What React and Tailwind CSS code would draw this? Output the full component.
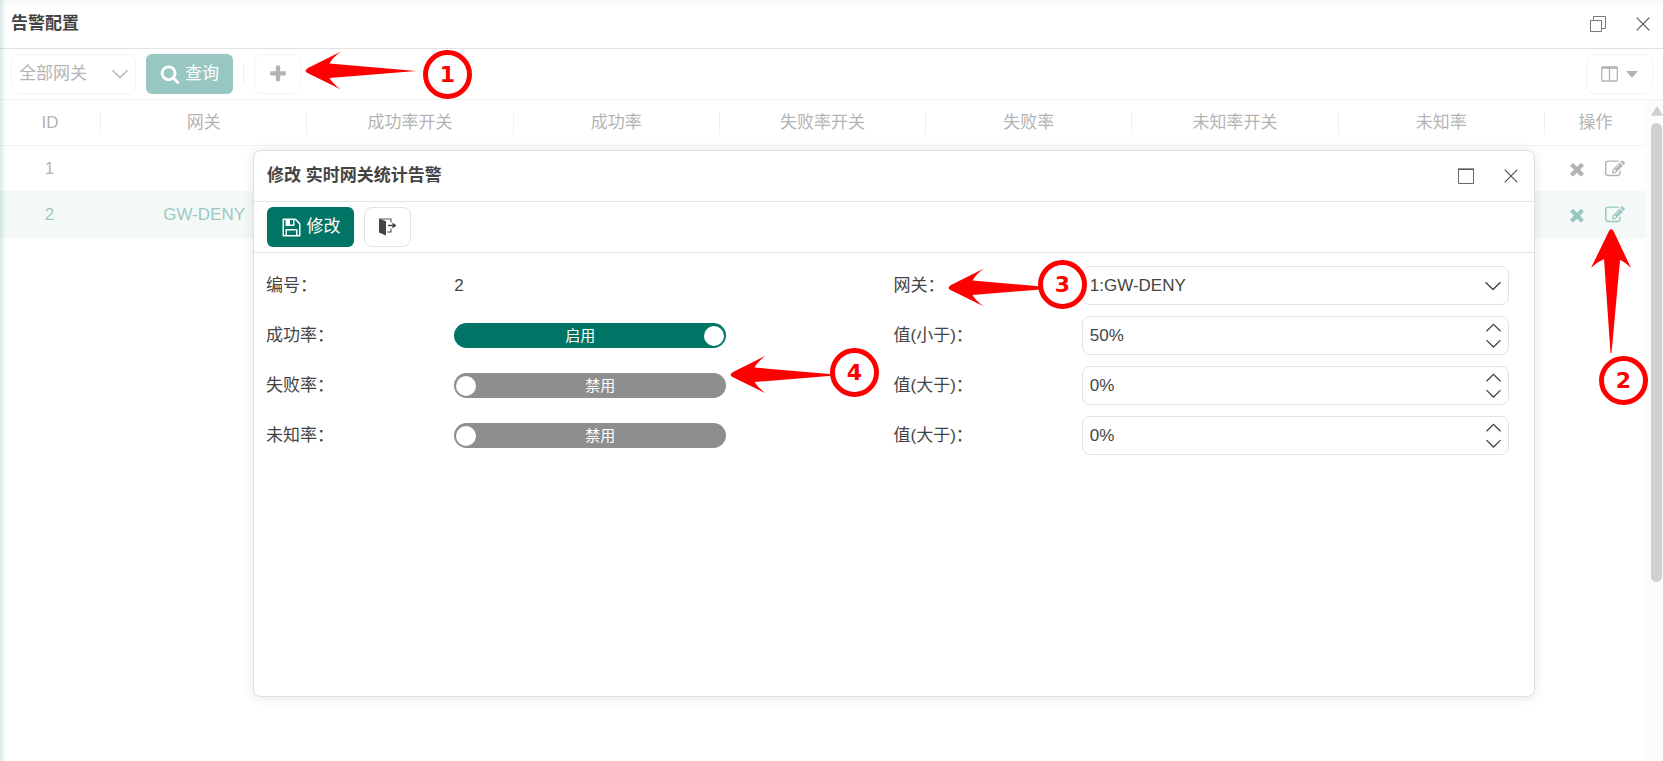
import React from "react";

const FA = {
  search:
    "M1216 832q0-185-131.5-316.5t-316.5-131.5-316.5 131.5-131.5 316.5 131.5 316.5 316.5 131.5 316.5-131.5 131.5-316.5zm512 832q0 52-38 90t-90 38q-54 0-90-38l-343-342q-179 124-399 124-143 0-273.5-55.5t-225-150-150-225-55.5-273.5 55.5-273.5 150-225 225-150 273.5-55.5 273.5 55.5 225 150 150 225 55.5 273.5q0 220-124 399l343 343q37 37 37 90z",
  plus: "M1600 736v192q0 40-28 68t-68 28h-416v416q0 40-28 68t-68 28h-192q-40 0-68-28t-28-68v-416h-416q-40 0-68-28t-28-68v-192q0-40 28-68t68-28h416v-416q0-40 28-68t68-28h192q40 0 68 28t28 68v416h416q40 0 68 28t28 68z",
  times:
    "M1490 1322q0 40-28 68l-136 136q-28 28-68 28t-68-28l-294-294-294 294q-28 28-68 28t-68-28l-136-136q-28-28-28-68t28-68l294-294-294-294q-28-28-28-68t28-68l136-136q28-28 68-28t68 28l294 294 294-294q28-28 68-28t68 28l136 136q28 28 28 68t-28 68l-294 294 294 294q28 28 28 68z",
  edit: "M888 1184l116-116-152-152-116 116v56h96v96h56zm440-720q-16-16-33 1l-350 350q-17 17-1 33t33-1l350-350q17-17 1-33zm80 594v190q0 119-84.5 203.5t-203.5 84.5h-832q-119 0-203.5-84.5t-84.5-203.5v-832q0-119 84.5-203.5t203.5-84.5h832q63 0 117 25 15 7 18 23 3 17-9 29l-49 49q-14 14-32 8-23-6-45-6h-832q-66 0-113 47t-47 113v832q0 66 47 113t113 47h832q66 0 113-47t47-113v-126q0-13 9-22l64-64q15-15 35-7t20 29zm-96-738l288 288-672 672h-288v-288zm444 132l-92 92-288-288 92-92q28-28 68-28t68 28l152 152q28 28 28 68t-28 68z",
  save: "M512 1536h768v-384h-768v384zm896 0h128v-896q0-14-10-38.5t-20-34.5l-281-281q-10-10-34-20t-39-10v416q0 40-28 68t-68 28h-576q-40 0-68-28t-28-68v-416h-128v1280h128v-416q0-40 28-68t68-28h832q40 0 68 28t28 68v416zm-384-928v-320q0-13-9.5-22.5t-22.5-9.5h-192q-13 0-22.5 9.5t-9.5 22.5v320q0 13 9.5 22.5t22.5 9.5h192q13 0 22.5-9.5t9.5-22.5zm640 32v928q0 40-28 68t-68 28h-1344q-40 0-68-28t-28-68v-1344q0-40 28-68t68-28h928q40 0 88 20t76 48l280 280q28 28 48 76t20 88z",
};

function Icon({ name, className = "size-5" }) {
  return (
    <svg viewBox="0 0 1792 1792" fill="currentColor" className={className} aria-hidden="true">
      <path d={FA[name]} />
    </svg>
  );
}

function CloseIcon() {
  return (
    <svg viewBox="0 0 16 16" className="size-4" fill="none" stroke="#555" strokeWidth="1.2" aria-hidden="true">
      <path d="M1.7 1.7 14.3 14.3M14.3 1.7 1.7 14.3" />
    </svg>
  );
}

function RestoreIcon() {
  return (
    <svg viewBox="0 0 16 16" className="size-4" fill="none" stroke="#777" aria-hidden="true">
      <path d="M.5 4.5h11v11h-11zM3.5 4.5v-4h12v12h-4" />
    </svg>
  );
}

function MaximizeIcon() {
  return (
    <svg viewBox="0 0 16 16" className="size-4" fill="none" stroke="#666" aria-hidden="true">
      <path d="M.5 1v14.5h15V1" />
      <path d="M0 1.2h16" stroke="#555" strokeWidth="1.6" />
    </svg>
  );
}

function Chevron({ up = false, className = "w-4" }) {
  return (
    <svg viewBox="0 0 16 10" className={className} fill="none" stroke="currentColor" strokeWidth="1.4" aria-hidden="true">
      <path d={up ? "M.5 8.8 8 1.4l7.5 7.4" : "M.5 1.2 8 8.6l7.5-7.4"} />
    </svg>
  );
}

function ExitIcon() {
  return (
    <svg viewBox="0 0 18 18" className="size-[18px]" aria-hidden="true">
      <path d="M0 .5 7 3.2V17.500L0 14.500z" fill="#444" />
      <path d="M.5 1h11.500v3.500M12 10.500v3.500H8" fill="none" stroke="#555" strokeWidth="1.1" />
      <path d="M9 7.500h5.500" stroke="#444" strokeWidth="1.5" />
      <path d="M13.500 4.600 17.500 7.500l-4 2.900z" fill="#444" />
    </svg>
  );
}

function ColumnsIcon() {
  return (
    <svg viewBox="0 0 17 16" className="h-4 w-[17px]" fill="none" stroke="currentColor" strokeWidth="1.3" aria-hidden="true">
      <rect x=".7" y="1" width="15.600" height="14" rx="1" />
      <path d="M8.500 2v13" />
      <path d="M.7 1.800h15.600" strokeWidth="2" />
    </svg>
  );
}

const columns = ["网关", "成功率开关", "成功率", "失败率开关", "失败率", "未知率开关", "未知率"];
const rows = [
  { id: 1, gateway: "", active: false },
  { id: 2, gateway: "GW-DENY", active: true },
];

function HeaderCell({ children, last = false, className = "" }) {
  return (
    <th className={`h-[46px] border-b border-[#e2e2e2] p-0 font-normal ${className}`}>
      <div className={`flex h-[22px] items-center justify-center ${last ? "" : "border-r border-[#dcdcdc]"}`}>{children}</div>
    </th>
  );
}

function GatewayTable() {
  return (
    <table className="w-full table-fixed border-separate border-spacing-0 self-start text-center">
      <thead>
        <tr>
          <HeaderCell className="w-[101px]">ID</HeaderCell>
          {columns.map((c) => (
            <HeaderCell key={c}>{c}</HeaderCell>
          ))}
          <HeaderCell last className="w-[101px]">操作</HeaderCell>
        </tr>
      </thead>
      <tbody>
        {rows.map((r) => (
          <tr key={r.id} className={r.active ? "bg-[#e5f1f0] text-[#007566]" : ""}>
            <td className="h-[46px] border-b border-[#e5eeed] p-0 pr-[2px]">{r.id}</td>
            <td className="border-b border-[#e5eeed] p-0">{r.gateway}</td>
            {columns.slice(1).map((c) => (
              <td key={c} className="border-b border-[#e5eeed] p-0" />
            ))}
            <td className="border-b border-[#e5eeed] p-0">
              <div className="flex items-center justify-center gap-[18px]">
                <button type="button" aria-label="删除">
                  <Icon name="times" />
                </button>
                <button type="button" aria-label="编辑">
                  <Icon name="edit" />
                </button>
              </div>
            </td>
          </tr>
        ))}
      </tbody>
    </table>
  );
}

function Scrollbar() {
  return (
    <div className="flex w-[17px] shrink-0 flex-col items-center bg-[#fafafa] pl-1 pt-[6px]" aria-hidden="true">
      <svg viewBox="0 0 12 10" className="h-[10px] w-3" fill="#8b8b8b">
        <path d="M6 1.500 11 9H1z" stroke="#8b8b8b" strokeWidth="1.500" strokeLinejoin="round" />
      </svg>
      <div className="mt-[7px] h-[70%] w-[11px] rounded-full bg-[#8b8b8b]" />
    </div>
  );
}

function Switch({ id, label, checked }) {
  return (
    <label
      htmlFor={id}
      className={`flex h-[25px] w-[272px] cursor-pointer items-center rounded-full p-[2px] text-[15px] text-white ${
        checked ? "flex-row-reverse bg-[#007566]" : "bg-[#8e8e8e]"
      }`}
    >
      <input id={id} type="checkbox" role="switch" aria-label={label} defaultChecked={checked} className="peer sr-only" />
      <span className="size-5 shrink-0 rounded-full bg-white" />
      <span className="flex-1 text-center leading-5">{checked ? "启用" : "禁用"}</span>
    </label>
  );
}

function Field({ label, htmlFor, children }) {
  return (
    <div className="flex h-[39px] items-center">
      <label htmlFor={htmlFor} className="w-[30%]">
        {label}
      </label>
      <div className="w-[70%] pr-3">{children}</div>
    </div>
  );
}

function NumberBox({ id, value }) {
  return (
    <div className="flex h-[39px] items-center rounded-lg border border-[#e2e2e2] px-[7px]">
      <input id={id} type="text" defaultValue={value} className="min-w-0 flex-1 outline-none" />
      <div className="flex flex-col gap-[6px]">
        <button type="button" aria-label="增加">
          <Chevron up className="w-[15px]" />
        </button>
        <button type="button" aria-label="减少">
          <Chevron className="w-[15px]" />
        </button>
      </div>
    </div>
  );
}

function EditDialog() {
  return (
    <section
      role="dialog"
      aria-labelledby="dialog-title"
      className="flex h-[547px] flex-col rounded-lg border border-[#dfdfdf] bg-white shadow-[0_1px_12px_rgba(0,0,0,0.1)]"
    >
      <header className="flex h-[51px] items-center justify-between border-b border-[#e2e2e2] pl-[13px] pr-[15px]">
        <h2 id="dialog-title" className="font-bold">
          修改 实时网关统计告警
        </h2>
        <div className="flex gap-[29px]">
          <button type="button" aria-label="最大化">
            <MaximizeIcon />
          </button>
          <button type="button" aria-label="关闭">
            <CloseIcon />
          </button>
        </div>
      </header>
      <div className="flex gap-[10px] border-b border-[#e2e2e2] px-[13px] py-[5px]">
        <button type="button" className="flex h-10 w-[87px] items-center justify-center gap-[5px] rounded-md bg-[#007566] text-white">
          <Icon name="save" className="size-[21px]" />
          修改
        </button>
        <button type="button" aria-label="退出" className="flex h-10 w-[47px] items-center justify-center rounded-lg border border-[#e2e2e2]">
          <ExitIcon />
        </button>
      </div>
      <form className="grid grid-cols-2 gap-y-[11px] py-[13px] pl-3 pr-[13px]">
        <Field label="编号：" htmlFor="f-id">
          <output id="f-id">2</output>
        </Field>
        <Field label="网关：" htmlFor="f-gw">
          <div className="relative">
            <select id="f-gw" className="h-[39px] w-full appearance-none rounded-lg border border-[#e2e2e2] bg-transparent pl-[7px] pr-8 outline-none">
              <option>1:GW-DENY</option>
            </select>
            <span className="pointer-events-none absolute inset-y-0 right-2 flex items-center">
              <Chevron />
            </span>
          </div>
        </Field>
        <Field label="成功率：" htmlFor="f-s1">
          <Switch id="f-s1" label="成功率" checked />
        </Field>
        <Field label="值(小于)：" htmlFor="f-v1">
          <NumberBox id="f-v1" value="50%" />
        </Field>
        <Field label="失败率：" htmlFor="f-s2">
          <Switch id="f-s2" label="失败率" checked={false} />
        </Field>
        <Field label="值(大于)：" htmlFor="f-v2">
          <NumberBox id="f-v2" value="0%" />
        </Field>
        <Field label="未知率：" htmlFor="f-s3">
          <Switch id="f-s3" label="未知率" checked={false} />
        </Field>
        <Field label="值(大于)：" htmlFor="f-v3">
          <NumberBox id="f-v3" value="0%" />
        </Field>
      </form>
    </section>
  );
}

function Badge({ n, className }) {
  return (
    <span
      className={`absolute flex size-[49px] items-center justify-center rounded-full border-5 border-[#fe0000] bg-white font-['DejaVu_Sans',sans-serif] text-[22px] leading-none font-bold text-[#fe0000] ${className}`}
    >
      {n}
    </span>
  );
}

function ArrowLeft({ className }) {
  return (
    <svg viewBox="0 0 111 39" className={`absolute h-[39px] w-[111px] ${className}`} fill="#fe0000" aria-hidden="true">
      <path d="M.5 19.500Q1.500 17.800 3.500 16.800L36 0.500Q28 6 24.500 12.500L111 20 24.500 27Q28 33 36 38.500L3.500 22.500Q.5 21.500.5 19.500z" />
    </svg>
  );
}

function ArrowUp({ className }) {
  return (
    <svg viewBox="0 0 40 124" className={`absolute h-[124px] w-10 ${className}`} fill="#fe0000" aria-hidden="true">
      <path d="M20 0Q22 .5 23 3L40 39Q34 33 29 31L20.500 124h-1L13 30Q6 33 0 39L17.500 3Q18.500.5 20 0z" />
    </svg>
  );
}

export default function App() {
  return (
    <div className="relative flex min-h-screen flex-col bg-white font-['Liberation_Sans','Noto_Sans_CJK_SC',sans-serif] text-[17px] leading-6 text-[#444]">
      <header className="flex h-[49px] items-center justify-between border-b border-[#e2e2e2] bg-linear-to-b from-[#f8f8f8] to-white to-15% pl-[11px] pr-3">
        <h1 className="font-bold">告警配置</h1>
        <div className="flex gap-[29px]">
          <button type="button" aria-label="还原">
            <RestoreIcon />
          </button>
          <button type="button" aria-label="关闭">
            <CloseIcon />
          </button>
        </div>
      </header>

      <main className="flex flex-1 flex-col opacity-40">
        <div className="flex items-center border-b border-[#e2e2e2] py-[5px] pl-[11px] pr-[10px]">
          <div className="relative w-[125px]">
            <select aria-label="网关" className="h-10 w-full appearance-none rounded-lg border border-[#e2e2e2] bg-transparent pl-[7px] outline-none">
              <option>全部网关</option>
            </select>
            <span className="pointer-events-none absolute inset-y-0 right-2 flex items-center">
              <Chevron />
            </span>
          </div>
          <button type="button" className="ml-[10px] flex h-10 w-[87px] items-center justify-center gap-[5px] rounded-md bg-[#007566] text-white">
            <Icon name="search" />
            查询
          </button>
          <span className="mx-[10px] h-5 w-px bg-[#dcdcdc]" />
          <button type="button" aria-label="新增" className="flex h-10 w-[47px] items-center justify-center rounded-lg border border-[#e2e2e2]">
            <Icon name="plus" />
          </button>
          <button type="button" aria-label="列设置" className="ml-auto flex h-10 w-[67px] items-center justify-center gap-2 rounded-lg border border-[#e2e2e2]">
            <ColumnsIcon />
            <svg viewBox="0 0 12 7" className="h-[7px] w-3" fill="currentColor" aria-hidden="true">
              <path d="M0 0h12L6 7z" />
            </svg>
          </button>
        </div>
        <div className="flex flex-1">
          <GatewayTable />
          <Scrollbar />
        </div>
      </main>

      <div className="pointer-events-none absolute inset-y-0 left-0 w-[6px] bg-linear-to-r from-[#007566]/15 to-transparent" />

      <div className="absolute top-[150px] right-[128px] left-[253px]">
        <EditDialog />
      </div>

      <div className="pointer-events-none absolute inset-0">
        <ArrowLeft className="top-[51px] left-[305px]" />
        <Badge n="1" className="top-[50px] left-[423px]" />
        <ArrowUp className="top-[229px] left-[1591px]" />
        <Badge n="2" className="top-[356px] left-[1599px]" />
        <ArrowLeft className="top-[268px] left-[948px]" />
        <Badge n="3" className="top-[260px] left-[1038px]" />
        <ArrowLeft className="top-[355px] left-[730px]" />
        <Badge n="4" className="top-[348px] left-[830px]" />
      </div>
    </div>
  );
}
